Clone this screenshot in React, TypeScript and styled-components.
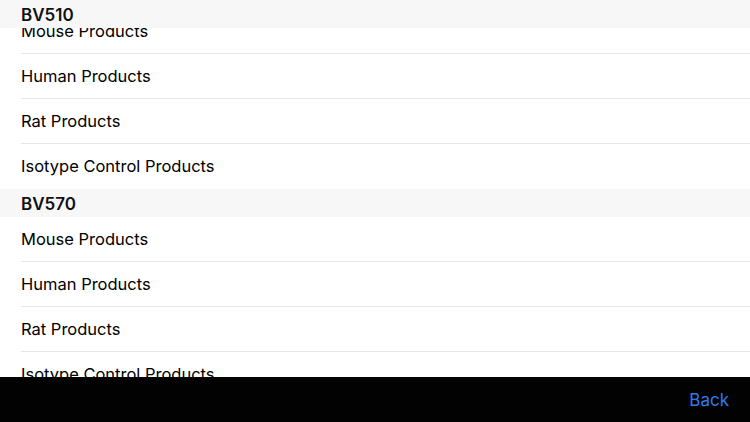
import React, { useLayoutEffect, useRef } from 'react';
import styled, { createGlobalStyle } from 'styled-components';

const GlobalStyle = createGlobalStyle`
  html, body {
    margin: 0;
    padding: 0;
    background: #ffffff;
  }
  body {
    font-family: 'Inter', 'Liberation Sans', sans-serif;
    -webkit-font-smoothing: antialiased;
  }
`;

const Screen = styled.div`
  width: 750px;
  height: 422px;
  display: flex;
  flex-direction: column;
  overflow: hidden;
`;

const List = styled.div`
  flex: 1 1 auto;
  overflow: hidden;
  background: #ffffff;
`;

const SectionHeader = styled.div`
  position: sticky;
  top: 0;
  z-index: 1;
  height: 28px;
  display: flex;
  align-items: center;
  padding: 1px 21px 0;
  box-sizing: border-box;
  background: #f7f7f7;
  color: #111111;
  font-size: 17px;
  font-weight: 600;
`;

const Row = styled.div`
  height: 45px;
  display: flex;
  padding-left: 21px;
  color: #000000;
  font-size: 16.5px;
`;

const RowLabel = styled.div<{ $last?: boolean }>`
  flex: 1 1 auto;
  display: flex;
  align-items: center;
  box-sizing: border-box;
  border-bottom: 1px solid ${({ $last }) => ($last ? 'transparent' : '#e6e6e6')};
`;

const Toolbar = styled.div`
  flex: 0 0 45px;
  background: #020202;
  display: flex;
  align-items: center;
  justify-content: flex-end;
  padding: 0 21px;
`;

const BackButton = styled.button`
  background: none;
  border: none;
  padding: 0;
  color: #2f7cf0;
  font-family: 'Inter', 'Liberation Sans', sans-serif;
  font-size: 17px;
  cursor: pointer;
`;

const sections = ['BV421', 'BV480', 'BV510', 'BV570', 'BV605'];
const products = ['Mouse Products', 'Human Products', 'Rat Products', 'Isotype Control Products'];

const App: React.FC = () => {
  const listRef = useRef<HTMLDivElement>(null);

  useLayoutEffect(() => {
    const list = listRef.current;
    if (!list) return;
    const target = list.querySelector<HTMLElement>('[data-section="BV510"]');
    if (target) list.scrollTop = target.offsetTop + 19;
  }, []);

  return (
    <>
      <GlobalStyle />
      <Screen>
        <List ref={listRef}>
          {sections.map((name) => (
            <section key={name} data-section={name}>
              <SectionHeader>{name}</SectionHeader>
              {products.map((p, i) => (
                <Row key={p}>
                  <RowLabel $last={i === products.length - 1}>{p}</RowLabel>
                </Row>
              ))}
            </section>
          ))}
        </List>
        <Toolbar>
          <BackButton>Back</BackButton>
        </Toolbar>
      </Screen>
    </>
  );
};

export default App;
